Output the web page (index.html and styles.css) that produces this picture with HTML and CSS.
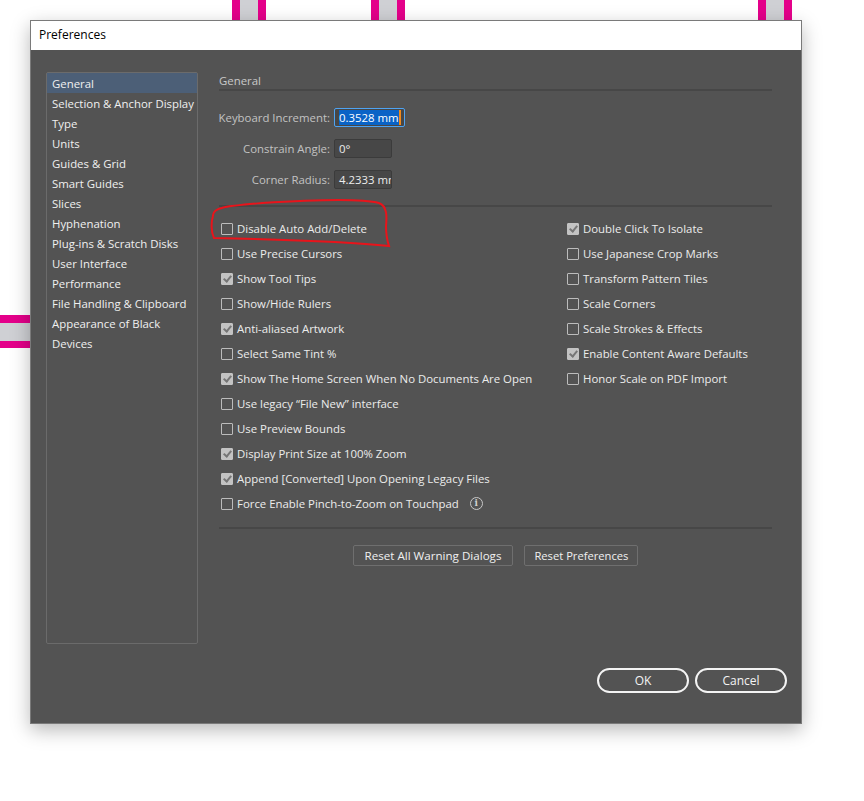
FILE: index.html
```html
<!DOCTYPE html>
<html>
<head>
<meta charset="utf-8">
<link rel="stylesheet" href="styles.css">
</head>
<body>
<div class="canvas">
  <div class="bar vbar b1"></div>
  <div class="bar vbar b2"></div>
  <div class="bar vbar b3"></div>
  <div class="bar hbar b4"></div>

  <div class="dialog">
    <div class="titlebar">Preferences</div>
    <div class="content">
      <ul class="sidebar">
        <li class="selected">General</li>
        <li>Selection &amp; Anchor Display</li>
        <li>Type</li>
        <li>Units</li>
        <li>Guides &amp; Grid</li>
        <li>Smart Guides</li>
        <li>Slices</li>
        <li>Hyphenation</li>
        <li>Plug-ins &amp; Scratch Disks</li>
        <li>User Interface</li>
        <li>Performance</li>
        <li>File Handling &amp; Clipboard</li>
        <li>Appearance of Black</li>
        <li>Devices</li>
      </ul>
      <div class="panel">
        <div class="heading">General</div>
        <div class="fields">
          <label class="flabel">Keyboard Increment:</label>
          <div class="input focused"><span class="sel">0.3528 mm</span><span class="caret"></span></div>
          <label class="flabel">Constrain Angle:</label>
          <div class="input small">0°</div>
          <label class="flabel">Corner Radius:</label>
          <div class="input small">4.2333 mm</div>
        </div>
        <div class="sep"></div>
        <div class="checks">
          <div class="col">
            <div class="cb"><span class="box"></span>Disable Auto Add/Delete</div>
            <div class="cb"><span class="box"></span>Use Precise Cursors</div>
            <div class="cb"><span class="box on"></span>Show Tool Tips</div>
            <div class="cb"><span class="box"></span>Show/Hide Rulers</div>
            <div class="cb"><span class="box on"></span>Anti-aliased Artwork</div>
            <div class="cb"><span class="box"></span>Select Same Tint %</div>
            <div class="cb"><span class="box on"></span>Show The Home Screen When No Documents Are Open</div>
            <div class="cb"><span class="box"></span>Use legacy “File New” interface</div>
            <div class="cb"><span class="box"></span>Use Preview Bounds</div>
            <div class="cb"><span class="box on"></span>Display Print Size at 100% Zoom</div>
            <div class="cb"><span class="box on"></span>Append [Converted] Upon Opening Legacy Files</div>
            <div class="cb"><span class="box"></span>Force Enable Pinch-to-Zoom on Touchpad<span class="info">i</span></div>
          </div>
          <div class="col">
            <div class="cb"><span class="box on"></span>Double Click To Isolate</div>
            <div class="cb"><span class="box"></span>Use Japanese Crop Marks</div>
            <div class="cb"><span class="box"></span>Transform Pattern Tiles</div>
            <div class="cb"><span class="box"></span>Scale Corners</div>
            <div class="cb"><span class="box"></span>Scale Strokes &amp; Effects</div>
            <div class="cb"><span class="box on"></span>Enable Content Aware Defaults</div>
            <div class="cb"><span class="box"></span>Honor Scale on PDF Import</div>
          </div>
        </div>
        <div class="sep sep2"></div>
        <div class="resets">
          <button class="btn">Reset All Warning Dialogs</button>
          <button class="btn btn2">Reset Preferences</button>
        </div>
      </div>
    </div>
    <div class="footer">
      <button class="pill">OK</button>
      <button class="pill">Cancel</button>
    </div>
  </div>

  <svg class="mark" width="864" height="801" viewBox="0 0 864 801">
    <path d="M213 216 C212 207 228 206 262 203 C310 200 360 198 379 203 C387 206 387 216 386 226 C386 236 388 243 389 246 C360 243 300 240 214 238 C211 232 211 222 213 216" fill="none" stroke="#e8141b" stroke-width="2"/>
  </svg>
</div>
</body>
</html>
```
FILE: styles.css
```css
html, body {
  margin: 0;
  padding: 0;
  background: #ffffff;
}
.canvas {
  position: relative;
  width: 864px;
  height: 801px;
  overflow: hidden;
  font-family: "Open Sans", "Noto Sans", sans-serif;
  font-size: 11.4px;
  padding-top: 20px;
  box-sizing: border-box;
}
.bar {
  position: absolute;
  background: #cfd0d4;
  box-sizing: border-box;
}
.vbar {
  top: 0;
  width: 34px;
  height: 60px;
  border-left: 8px solid #e4008a;
  border-right: 8px solid #e4008a;
}
.b1 { left: 232px; }
.b2 { left: 371px; }
.b3 { left: 758px; }
.hbar {
  left: 0;
  top: 315px;
  width: 60px;
  height: 33px;
  border-top: 8px solid #e4008a;
  border-bottom: 7px solid #e4008a;
}
.dialog {
  position: relative;
  margin-left: 30px;
  width: 772px;
  height: 704px;
  box-sizing: border-box;
  border: 1px solid #7a7a7a;
  background: #535353;
  box-shadow: 0 6px 18px rgba(0, 0, 0, 0.28);
  display: flex;
  flex-direction: column;
}
.titlebar {
  height: 29px;
  background: #ffffff;
  color: #000;
  padding-left: 8px;
  line-height: 28px;
  font-size: 12px;
}
.content {
  display: flex;
  padding: 22px 29px 0 15px;
}
.sidebar {
  list-style: none;
  margin: 0;
  padding: 0;
  width: 152px;
  height: 572px;
  box-sizing: border-box;
  border: 1px solid #6b6b6b;
  border-radius: 2px;
  color: #f0f0f0;
}
.sidebar li {
  height: 20px;
  line-height: 21px;
  padding-left: 5px;
  white-space: nowrap;
}
.sidebar li.selected {
  background: #4c5f77;
}
.panel {
  flex: 1;
  margin-left: 21px;
  display: flex;
  flex-direction: column;
}
.heading {
  height: 17px;
  line-height: 17px;
  color: #c9c9c9;
  border-bottom: 2px solid #474747;
}
.fields {
  margin-top: 17px;
  display: grid;
  grid-template-columns: 111px auto;
  column-gap: 4px;
  row-gap: 12px;
  align-items: center;
  justify-items: start;
}
.flabel {
  justify-self: end;
  color: #c2c2c2;
  white-space: nowrap;
}
.input {
  height: 19px;
  box-sizing: border-box;
  border: 1px solid #3b3b3b;
  background: #474747;
  border-radius: 2px;
  color: #ececec;
  line-height: 17px;
  padding-left: 4px;
  width: 58px;
  white-space: nowrap;
  overflow: hidden;
}
.input.focused {
  width: 71px;
  border: 1px solid #4ea3f2;
  padding-left: 4px;
  display: flex;
  align-items: center;
}
.sel {
  background: #0a63c6;
  color: #fff;
  line-height: 15px;
}
.caret {
  width: 2px;
  height: 15px;
  background: #f08a1c;
}
.sep {
  margin-top: 16px;
  height: 2px;
  background: #474747;
}
.checks {
  margin-top: 9px;
  display: grid;
  grid-template-columns: 346px auto;
}
.cb {
  height: 25px;
  display: flex;
  align-items: center;
  color: #ececec;
  white-space: nowrap;
  padding-left: 2px;
}
.box {
  width: 12px;
  height: 12px;
  box-sizing: border-box;
  border: 1px solid #bcbcbc;
  border-radius: 1px;
  margin-right: 4px;
  flex: none;
  position: relative;
}
.box.on {
  background: #c3c3c3;
  border-color: #c3c3c3;
}
.box.on::after {
  content: "";
  position: absolute;
  left: 3px;
  top: 0px;
  width: 3px;
  height: 6px;
  border-right: 2px solid #767676;
  border-bottom: 2px solid #767676;
  transform: rotate(40deg);
}
.info {
  margin-left: 11px;
  width: 13px;
  height: 13px;
  box-sizing: border-box;
  border: 1px solid #c8c8c8;
  border-radius: 50%;
  font-size: 9px;
  line-height: 11px;
  text-align: center;
  color: #d0d0d0;
  font-family: "DejaVu Serif", serif;
  font-weight: bold;
}
.sep2 {
  margin-top: 11px;
}
.resets {
  margin-top: 16px;
  display: flex;
  justify-content: center;
  gap: 11px;
}
.btn {
  height: 21px;
  padding: 0 11px;
  background: #535353;
  border: 1px solid #6f6f6f;
  border-radius: 2px;
  color: #f0f0f0;
  font-family: inherit;
  font-size: 11.6px;
}
.btn2 {
  padding: 0 9px;
  font-size: 11.2px;
}
.footer {
  margin-top: 24px;
  display: flex;
  justify-content: flex-end;
  gap: 6px;
  padding-right: 14px;
}
.pill {
  width: 92px;
  height: 25px;
  border: 2px solid #f4f4f4;
  border-radius: 13px;
  background: #535353;
  color: #f4f4f4;
  font-family: inherit;
  font-size: 12px;
}
.mark {
  position: absolute;
  left: 0;
  top: 0;
  pointer-events: none;
}
```
